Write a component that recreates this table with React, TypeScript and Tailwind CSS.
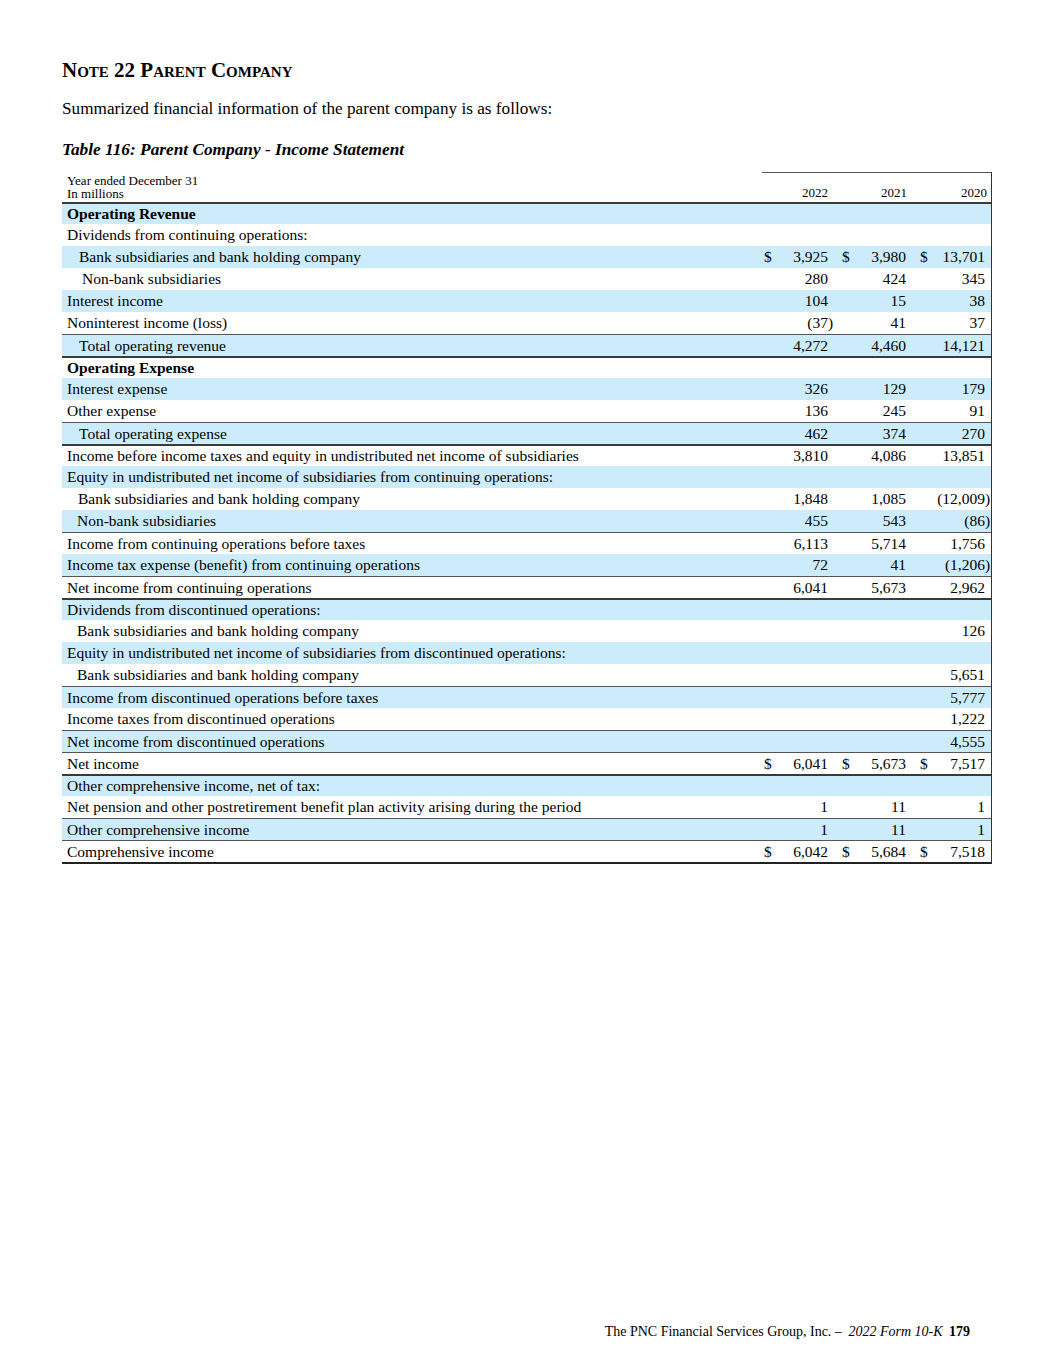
type Cell = { v: string; d?: boolean } | null;

type Row = {
  label: string;
  indent?: number;
  bold?: boolean;
  top?: "thin" | "thick";
  bottom?: "thick";
  cells?: [Cell, Cell, Cell];
};

const n = (v: string, d?: boolean): Cell => ({ v, d });

const rows: Row[] = [
  { label: "Operating Revenue", bold: true, top: "thick" },
  { label: "Dividends from continuing operations:" },
  { label: "Bank subsidiaries and bank holding company", indent: 12, cells: [n("3,925", true), n("3,980", true), n("13,701", true)] },
  { label: "Non-bank subsidiaries", indent: 15, cells: [n("280"), n("424"), n("345")] },
  { label: "Interest income", cells: [n("104"), n("15"), n("38")] },
  { label: "Noninterest income (loss)", cells: [n("(37)"), n("41"), n("37")] },
  { label: "Total operating revenue", indent: 12, top: "thin", cells: [n("4,272"), n("4,460"), n("14,121")] },
  { label: "Operating Expense", bold: true, top: "thick" },
  { label: "Interest expense", cells: [n("326"), n("129"), n("179")] },
  { label: "Other expense", cells: [n("136"), n("245"), n("91")] },
  { label: "Total operating expense", indent: 12, top: "thin", cells: [n("462"), n("374"), n("270")] },
  { label: "Income before income taxes and equity in undistributed net income of subsidiaries", top: "thick", cells: [n("3,810"), n("4,086"), n("13,851")] },
  { label: "Equity in undistributed net income of subsidiaries from continuing operations:" },
  { label: "Bank subsidiaries and bank holding company", indent: 11, cells: [n("1,848"), n("1,085"), n("(12,009)")] },
  { label: "Non-bank subsidiaries", indent: 10, cells: [n("455"), n("543"), n("(86)")] },
  { label: "Income from continuing operations before taxes", top: "thin", cells: [n("6,113"), n("5,714"), n("1,756")] },
  { label: "Income tax expense (benefit) from continuing operations", cells: [n("72"), n("41"), n("(1,206)")] },
  { label: "Net income from continuing operations", top: "thin", cells: [n("6,041"), n("5,673"), n("2,962")] },
  { label: "Dividends from discontinued operations:", top: "thick" },
  { label: "Bank subsidiaries and bank holding company", indent: 10, cells: [null, null, n("126")] },
  { label: "Equity in undistributed net income of subsidiaries from discontinued operations:" },
  { label: "Bank subsidiaries and bank holding company", indent: 10, cells: [null, null, n("5,651")] },
  { label: "Income from discontinued operations before taxes", top: "thin", cells: [null, null, n("5,777")] },
  { label: "Income taxes from discontinued operations", cells: [null, null, n("1,222")] },
  { label: "Net income from discontinued operations", top: "thin", cells: [null, null, n("4,555")] },
  { label: "Net income", top: "thin", cells: [n("6,041", true), n("5,673", true), n("7,517", true)] },
  { label: "Other comprehensive income, net of tax:", top: "thick" },
  { label: "Net pension and other postretirement benefit plan activity arising during the period", cells: [n("1"), n("11"), n("1")] },
  { label: "Other comprehensive income", top: "thin", cells: [n("1"), n("11"), n("1")] },
  { label: "Comprehensive income", top: "thin", bottom: "thick", cells: [n("6,042", true), n("5,684", true), n("7,518", true)] },
];

const NumCell = ({ cell }: { cell: Cell }) => {
  if (!cell) return <div />;
  const paren = cell.v.endsWith(")");
  const body = paren ? cell.v.slice(0, -1) : cell.v;
  return (
    <div className="flex items-center pl-[8px]">
      <span className="w-[9px]">{cell.d ? "$" : ""}</span>
      <span className="flex-1 text-right">{body}</span>
      <span className="w-[6px]">{paren ? ")" : ""}</span>
    </div>
  );
};

const TableRow = ({ row, i }: { row: Row; i: number }) => {
  const border =
    row.top === "thick"
      ? "border-t-2 border-[#3a3a3a]"
      : row.top === "thin"
        ? "border-t border-[#555]"
        : "";
  const bottom = row.bottom ? "border-b-2 border-b-[#222] h-[24px]" : "h-[22px]";
  return (
    <div
      className={`grid grid-cols-[1fr_78px_78px_79px] items-center ${bottom} ${border} ${
        i % 2 === 0 ? "bg-[#ccecfc]" : "bg-white"
      }`}
    >
      <div className={`whitespace-nowrap ${row.bold ? "font-bold" : ""}`} style={{ paddingLeft: 5 + (row.indent ?? 0) }}>
        {row.label}
      </div>
      {(row.cells ?? [null, null, null]).map((c, k) => (
        <NumCell key={k} cell={c} />
      ))}
    </div>
  );
};

export default function App() {
  return (
    <div
      className="w-[1055px] min-h-[1365px] bg-white text-black pt-[57px] pl-[62px]"
      style={{ fontFamily: '"Liberation Serif", "Times New Roman", serif' }}
    >
      <h1 className="text-[21px] leading-[26px] font-bold [font-variant:small-caps]">Note 22 Parent Company</h1>
      <p className="mt-[15px] text-[17.2px] leading-[22px]">
        Summarized financial information of the parent company is as follows:
      </p>
      <p className="mt-[19px] text-[17.3px] leading-[22px] font-bold italic">
        Table 116: Parent Company - Income Statement
      </p>

      <div className="mt-[11px] w-[930px] border-r border-[#333] text-[15.5px] leading-[20px]">
        <div className="grid grid-cols-[1fr_78px_78px_79px] h-[30px] text-[13px] leading-[13px]">
          <div className="pt-[2px] pl-[5px]">
            <div>Year ended December 31</div>
            <div>In millions</div>
          </div>
          <div className="ml-[6px] border-t border-[#555] flex items-end justify-end pr-[6px] pb-[3px]">2022</div>
          <div className="border-t border-[#555] flex items-end justify-end pr-[5px] pb-[3px]">2021</div>
          <div className="border-t border-[#555] flex items-end justify-end pr-[4px] pb-[3px]">2020</div>
        </div>
        {rows.map((r, i) => (
          <TableRow key={i} row={r} i={i} />
        ))}
      </div>

      <div className="mt-[460px] w-[908px] flex justify-end text-[14px] leading-[16px]">
        <span>
          The PNC Financial Services Group, Inc. – <span className="italic ml-[3px]">2022 Form 10-K</span>{" "}
          <span className="font-bold ml-[3px]">179</span>
        </span>
      </div>
    </div>
  );
}
